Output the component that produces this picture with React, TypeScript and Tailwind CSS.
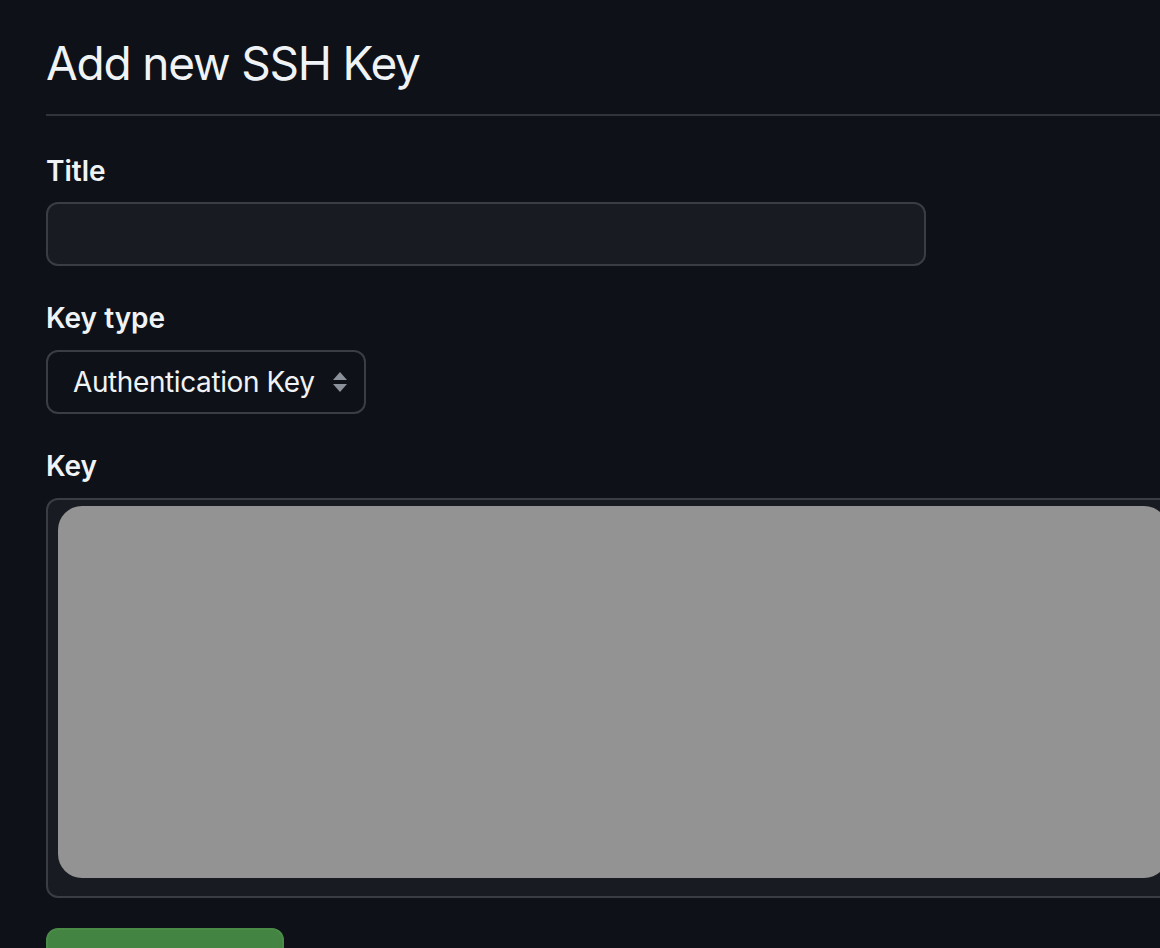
import React from 'react';

function Label({ children, className = '' }: { children: React.ReactNode; className?: string }) {
  return (
    <label className={`block text-[28px] leading-[36px] font-semibold text-[#f0f3f6] ${className}`}>
      {children}
    </label>
  );
}

export default function App() {
  return (
    <div
      className="h-[948px] w-[1160px] overflow-hidden bg-[#0e1117] pl-[46px]"
      style={{ fontFamily: 'Inter, "Noto Sans", sans-serif' }}
    >
      <div className="w-[1200px]">
        <h2 className="pt-[33px] pb-[21px] border-b-2 border-[#30343b] text-[46px] leading-[60px] font-normal text-[#f0f3f6] tracking-[-1.2px]">
          Add new SSH Key
        </h2>

        <form className="flex flex-col">
          <Label className="mt-[37px] mb-[13px]">Title</Label>
          <input
            type="text"
            className="h-[64px] w-[880px] rounded-[12px] border-2 border-[#3a3d44] bg-[#181b22] px-6 text-[28px] text-[#f0f3f6] outline-none"
          />

          <Label className="mt-[34px] mb-[14px]">Key type</Label>
          <div className="relative flex h-[64px] w-[320px] items-center rounded-[12px] border-2 border-[#3a3d44] bg-[#0e1117] pl-[25px] text-[28px] tracking-[-0.4px] text-[#f0f3f6]">
            <span>Authentication Key</span>
            <svg
              className="absolute right-[16px] top-[20px]"
              width="16"
              height="20"
              viewBox="0 0 16 20"
              fill="#8b919a"
            >
              <path d="M8 0 L15 8 H1 Z" />
              <path d="M1 12 H15 L8 20 Z" />
            </svg>
          </div>

          <Label className="mt-[34px] mb-[14px]">Key</Label>
          <div className="h-[400px] w-[1150px] rounded-[12px] border-2 border-[#3a3d44] bg-[#181b22] pl-[10px] pt-[6px]">
            <div className="h-[372px] w-[1110px] rounded-[24px] bg-[#939393]" />
          </div>

          {/* submit button, only its top edge is in view */}
          <button
            type="button"
            aria-label="Add SSH key"
            className="mt-[30px] h-[64px] w-[238px] rounded-[12px] border-2 border-[#4b8b48] bg-[#438443]"
          />
        </form>
      </div>
    </div>
  );
}
